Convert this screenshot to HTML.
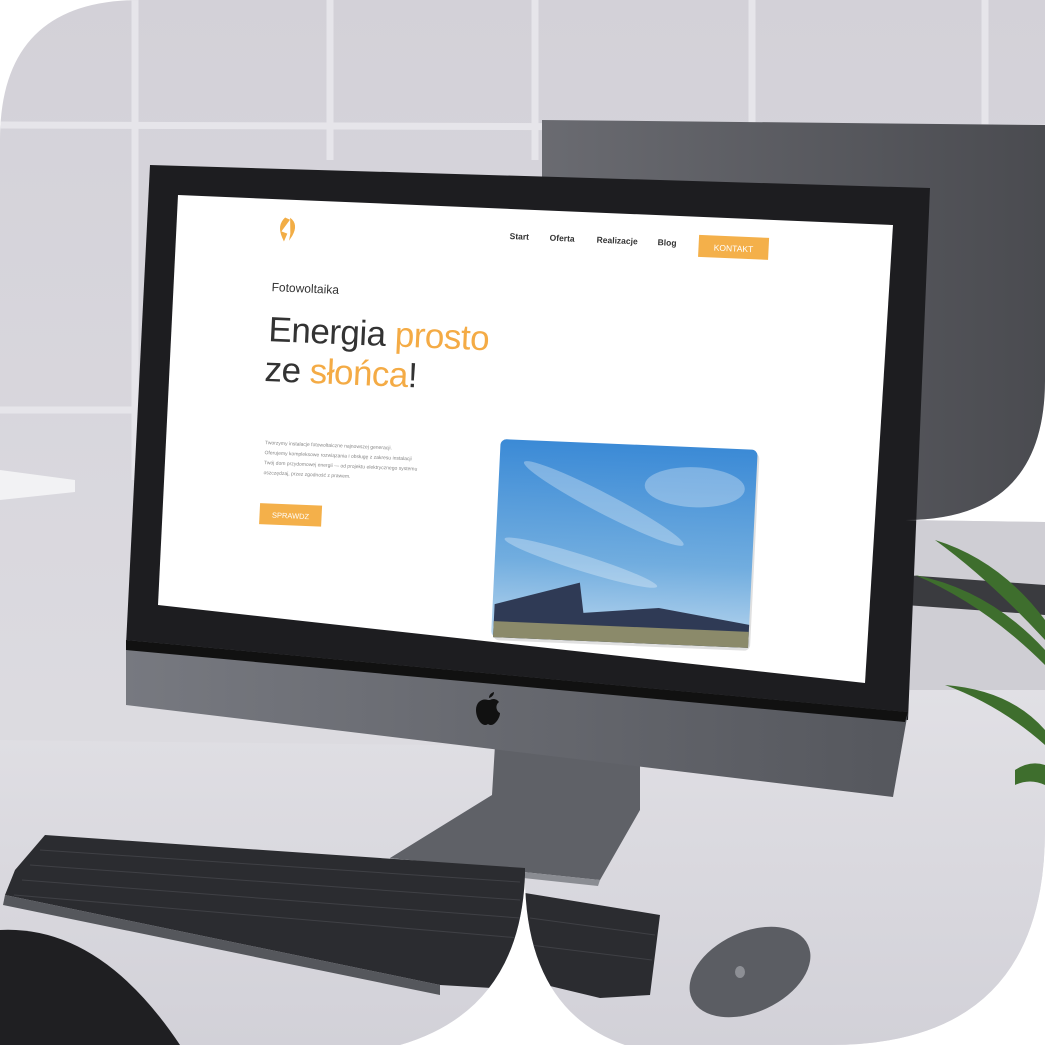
<!DOCTYPE html>
<html><head><meta charset="utf-8"><style>
html,body{margin:0;padding:0;background:#fff;width:1045px;height:1045px;overflow:hidden}
.wrap{position:absolute;left:0;top:0;width:1045px;height:1045px;clip-path:path("M0,140 Q0,0 140,0 L1045,0 L1045,380 Q1045,520 905,520 L1045,522 L1045,830 Q1045,1045 830,1045 L625,1045 Q525,1010 525,875 Q520,1010 400,1045 L0,1045 Z")}
svg text{font-family:"Liberation Sans",sans-serif}
</style></head><body>
<div class="wrap">
<svg width="1045" height="1045" viewBox="0 0 1045 1045">
<defs>
<linearGradient id="wall" x1="0" y1="0" x2="0" y2="1"><stop offset="0" stop-color="#d3d1d8"/><stop offset="1" stop-color="#e0dfe4"/></linearGradient>
<linearGradient id="bgmon" x1="0" y1="0" x2="1" y2="0"><stop offset="0" stop-color="#6a6b71"/><stop offset="1" stop-color="#4a4b50"/></linearGradient>
<linearGradient id="chin" x1="0" y1="0" x2="1" y2="0"><stop offset="0" stop-color="#777980"/><stop offset="1" stop-color="#55575d"/></linearGradient>
<linearGradient id="sky" x1="0" y1="0" x2="0" y2="1"><stop offset="0" stop-color="#3b8ad6"/><stop offset="0.6" stop-color="#71addf"/><stop offset="1" stop-color="#b9d6ee"/></linearGradient>
<linearGradient id="desk" x1="0" y1="0" x2="0" y2="1"><stop offset="0" stop-color="#e1e0e5"/><stop offset="1" stop-color="#d2d1d8"/></linearGradient>
</defs>
<rect width="1045" height="1045" fill="url(#wall)"/>
<g stroke="#e6e5ea" stroke-width="7">
<line x1="135" y1="0" x2="135" y2="480"/><line x1="330" y1="0" x2="330" y2="160"/><line x1="535" y1="0" x2="535" y2="160"/><line x1="752" y1="0" x2="752" y2="125"/><line x1="985" y1="0" x2="985" y2="125"/>
<line x1="0" y1="125" x2="1045" y2="128"/><line x1="0" y1="410" x2="150" y2="410"/>
</g>
<polygon points="0,470 75,480 75,492 0,500" fill="#f2f2f4"/>
<polygon points="542,120 1045,125 1045,520 542,520" fill="url(#bgmon)"/>
<rect x="880" y="520" width="165" height="250" fill="#cfced4"/>
<polygon points="905,575 1045,585 1045,615 905,605" fill="#3a3b3f"/>
<polygon points="870,740 1045,745 1045,770 870,765" fill="#111"/>
<rect x="0" y="690" width="1045" height="355" fill="url(#desk)"/>
<polygon points="0,690 880,690 880,750 0,740" fill="#dcdbe0"/>
<g fill="#3e6e2d">
<path d="M935,540 Q1000,560 1045,620 L1045,640 Q990,580 935,540Z"/>
<path d="M915,575 Q990,590 1045,650 L1045,665 Q985,605 915,575Z"/>
<path d="M945,685 Q1010,690 1045,730 L1045,745 Q1000,705 945,685Z"/>
<path d="M1015,770 Q1030,760 1045,765 L1045,785 Q1030,778 1015,785Z"/>
</g>
<polygon points="495,745 640,760 640,810 600,880 390,858 492,795" fill="#5f6167"/>
<polygon points="390,858 600,880 598,886 392,864" fill="#8a8c92"/>
<polygon points="150,165 930,188 908,720 126,645" fill="#1d1d20"/>
<polygon points="126,640 908,712 893,797 126,705" fill="url(#chin)"/>
<path d="M126,640 L908,712 L905,722 L126,650Z" fill="#111"/>
<path d="M488,700 c-6,-2 -12,2 -12,10 c0,8 5,15 9,15 c2,0 3,-1 3,-1 c0,0 1,1 3,1 c4,0 9,-7 9,-12 c-4,-2 -5,-8 -1,-11 c-2,-3 -6,-4 -9,-2 c-1,0 -1,0 -2,0z M489,698 c0,-3 2,-5 5,-6 c0,3 -2,5 -5,6z" fill="#111"/>
<polygon points="178,195 893,225 865,683 158,605" fill="#fff"/>
<g transform="matrix(1,0.042,-0.049,1,178,195)">
<path d="M108,18 q-8,8 -2,20 l2,4 l3,-8 l-6,-2 l8,-12 z M113,18 q9,6 3,18 l-3,5 l1,-7 z" fill="#f2ad45"/>
<g font-size="8.5" font-weight="bold" fill="#333">
<text x="333" y="30">Start</text><text x="373" y="30">Oferta</text><text x="420" y="30">Realizacje</text><text x="481" y="30">Blog</text>
</g>
<rect x="522" y="18" width="70" height="22" fill="#f4b04a"/>
<text x="557" y="33" font-size="8.5" fill="#fff" text-anchor="middle">KONTAKT</text>
<text x="98" y="92" font-size="12" fill="#333">Fotowoltaika</text>
<text x="97" y="142" font-size="35" fill="#333" letter-spacing="-0.5">Energia <tspan fill="#f4ab45">prosto</tspan></text>
<text x="95" y="182" font-size="35" fill="#333" letter-spacing="-0.5">ze <tspan fill="#f4ab45">słońca</tspan>!</text>
<g font-size="5" fill="#888">
<text x="99" y="245">Tworzymy instalacje fotowoltaiczne najnowszej generacji.</text>
<text x="99" y="255">Oferujemy kompleksowe rozwiązania i obsługę z zakresu instalacji</text>
<text x="99" y="265">Twój dom przydomowej energii — od projektu elektrycznego systemu</text>
<text x="99" y="275">oszczędzaj, przez zgodność z prawem.</text>
</g>
<rect x="97" y="304" width="62" height="21" fill="#f4b04a"/>
<text x="128" y="318" font-size="7.5" fill="#fff" text-anchor="middle">SPRAWDZ</text>
<rect x="336" y="233" width="257" height="198" rx="6" fill="#000" opacity="0.12"/>
<rect x="334" y="230" width="257" height="198" rx="6" fill="url(#sky)"/>
<g fill="#fff" opacity="0.3"><ellipse cx="440" cy="290" rx="90" ry="10" transform="rotate(25 440 290)"/><ellipse cx="530" cy="270" rx="50" ry="20"/><ellipse cx="420" cy="350" rx="80" ry="8" transform="rotate(15 420 350)"/></g>
<polygon points="336,395 420,370 425,400 500,392 591,405 591,428 336,428" fill="#2f3a55"/>
<rect x="336" y="412" width="255" height="16" fill="#8b8a6a"/>
</g>
<polygon points="45,835 525,868 525,990 440,985 5,895 15,870" fill="#2b2c30"/>
<polygon points="5,895 440,985 440,995 3,905" fill="#55575c"/>
<polygon points="525,893 660,915 650,995 600,998 525,980" fill="#2b2c30"/>
<g stroke="#45464b" stroke-width="1" opacity="0.8">
<line x1="40" y1="850" x2="520" y2="882"/><line x1="30" y1="865" x2="520" y2="900"/><line x1="22" y1="880" x2="520" y2="918"/><line x1="14" y1="895" x2="520" y2="938"/><line x1="530" y1="918" x2="655" y2="935"/><line x1="530" y1="945" x2="652" y2="960"/>
</g>
<ellipse cx="750" cy="972" rx="64" ry="40" transform="rotate(-25 750 972)" fill="#5b5d63"/>
<ellipse cx="740" cy="972" rx="5" ry="6" fill="#8d8f95"/>
<path d="M0,930 Q100,925 180,1045 L0,1045Z" fill="#1f1f22"/>
</svg>
</div>
</body></html>
